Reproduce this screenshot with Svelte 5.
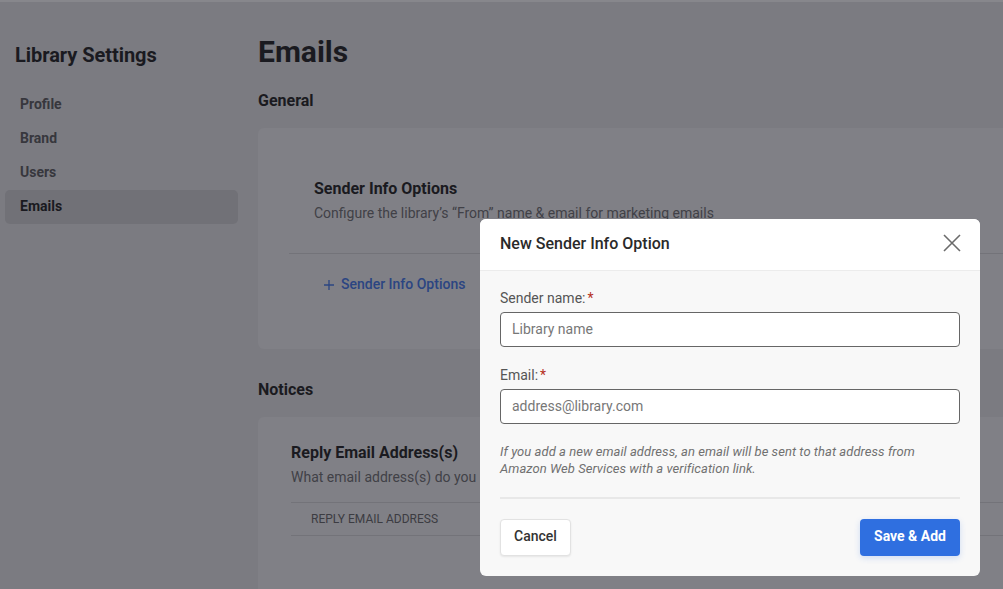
<script>
  const navItems = ["Profile", "Brand", "Users", "Emails"];
  let senderName = "";
  let email = "";
</script>

<div class="page">
  <aside class="sidebar">
    <h2>Library Settings</h2>
    <nav>
      {#each navItems as item}
        <div class="nav-item" class:active={item === "Emails"}>{item}</div>
      {/each}
    </nav>
  </aside>

  <main class="content">
    <h1>Emails</h1>
    <h3>General</h3>
    <section class="card sender-card">
      <div class="card-head">
        <h4>Sender Info Options</h4>
        <p>Configure the library’s “From” name &amp; email for marketing emails</p>
      </div>
      <div class="add-row">
        <svg width="12" height="12" viewBox="0 0 12 12"><path d="M6 1v10M1 6h10" stroke="currentColor" stroke-width="1.3" fill="none" /></svg>
        <span>Sender Info Options</span>
      </div>
    </section>

    <h3 class="notices">Notices</h3>
    <section class="card reply-card">
      <h4>Reply Email Address(s)</h4>
      <p>What email address(s) do you</p>
      <div class="table-head">REPLY EMAIL ADDRESS</div>
    </section>
  </main>

  <div class="modal">
    <header>
      <span>New Sender Info Option</span>
      <svg width="18" height="18" viewBox="0 0 18 18"><path d="M1 1l16 16M17 1L1 17" stroke="#6b6b6b" stroke-width="1.6" fill="none" /></svg>
    </header>
    <div class="modal-body">
      <label for="sender">Sender name:<span class="req">*</span></label>
      <input id="sender" type="text" placeholder="Library name" bind:value={senderName} />
      <label for="email" class="second">Email:<span class="req">*</span></label>
      <input id="email" type="text" placeholder="address@library.com" bind:value={email} />
      <p class="note">If you add a new email address, an email will be sent to that address from Amazon Web Services with a verification link.</p>
      <div class="actions">
        <button class="cancel">Cancel</button>
        <button class="save">Save &amp; Add</button>
      </div>
    </div>
  </div>
</div>

<style>
  :global(body) {
    margin: 0;
    font-family: Roboto, "Liberation Sans", sans-serif;
  }

  .page {
    position: relative;
    display: flex;
    height: 589px;
    overflow: hidden;
    background: #7b7b81;
    border-top: 2px solid #87878c;
    box-sizing: border-box;
    color: #1a1a20;
  }

  .sidebar {
    width: 238px;
    flex: none;
    padding: 42px 0 0 5px;
    box-sizing: border-box;
  }

  .sidebar h2 {
    margin: 0 0 21px 10px;
    font-size: 20px;
    line-height: 23px;
    font-weight: 700;
    letter-spacing: -0.05px;
  }

  .nav-item {
    height: 34px;
    line-height: 32px;
    padding-left: 15px;
    font-size: 14px;
    font-weight: 700;
    color: #37373d;
  }

  .nav-item.active {
    background: #717177;
    border-radius: 5px;
    color: #1a1a20;
  }

  .content {
    flex: 1;
    min-width: 0;
    margin-left: 20px;
    padding-top: 32px;
  }

  h1 {
    margin: 0;
    font-size: 30px;
    line-height: 35px;
    font-weight: 700;
  }

  h3 {
    margin: 22px 0 0;
    font-size: 16px;
    line-height: 19px;
    font-weight: 700;
  }

  h3.notices {
    margin-top: 31px;
  }

  .card {
    background: #808086;
    border-radius: 6px;
    box-sizing: border-box;
    width: 900px;
  }

  .sender-card {
    margin-top: 18px;
    height: 221px;
    padding: 51px 0 0 31px;
  }

  .card-head {
    padding: 0 0 31px 25px;
    border-bottom: 1px solid #737379;
  }

  h4 {
    margin: 0;
    font-size: 16px;
    line-height: 19px;
    font-weight: 700;
  }

  .card p {
    margin: 7px 0 0;
    font-size: 14px;
    line-height: 17px;
    color: #414147;
  }

  .add-row {
    display: flex;
    align-items: center;
    gap: 6px;
    margin: 22px 0 0 34px;
    font-size: 14px;
    line-height: 17px;
    font-weight: 500;
    color: #2b4582;
  }

  .reply-card {
    margin-top: 18px;
    height: 200px;
    padding: 26px 0 0 33px;
  }

  .table-head {
    margin-top: 16px;
    padding: 8px 0 8px 20px;
    font-size: 12px;
    line-height: 16px;
    color: #3c3c42;
    border-top: 1px solid #737379;
    border-bottom: 1px solid #737379;
  }

  .modal {
    position: absolute;
    left: 480px;
    top: 217px;
    width: 500px;
    height: 357px;
    border-radius: 6px;
    overflow: hidden;
    background: #f8f8f8;
    color: #333;
  }

  .modal header {
    display: flex;
    justify-content: space-between;
    align-items: center;
    height: 52px;
    box-sizing: border-box;
    padding: 0 19px 3px 20px;
    background: #fff;
    border-bottom: 1px solid #ececec;
    font-size: 16px;
    font-weight: 500;
    color: #2a2a2a;
  }

  .modal-body {
    display: flex;
    flex-direction: column;
    padding: 19px 20px 0;
  }

  label {
    font-size: 14px;
    line-height: 16px;
    margin-bottom: 6px;
    color: #555;
  }

  label.second {
    margin-top: 20px;
  }

  .req {
    margin-left: 2px;
    color: #b5301c;
  }

  input {
    height: 35px;
    box-sizing: border-box;
    padding: 0 11px 2px;
    border: 1px solid #666;
    border-radius: 4px;
    background: #fff;
    font-family: inherit;
    font-size: 14px;
    outline: none;
  }

  input::placeholder {
    color: #777;
    opacity: 1;
  }

  .note {
    margin: 19px 0 0;
    padding-bottom: 20px;
    font-size: 13px;
    line-height: 17px;
    font-style: italic;
    letter-spacing: 0.05px;
    color: #707070;
    border-bottom: 2px solid #e8e8e8;
  }

  .actions {
    display: flex;
    justify-content: space-between;
    margin-top: 20px;
  }

  button {
    height: 37px;
    border-radius: 4px;
    font-family: inherit;
    font-size: 14px;
    font-weight: 500;
    padding: 0 0 3px;
    cursor: pointer;
  }

  .cancel {
    width: 71px;
    background: #fff;
    border: 1px solid #e2e2e2;
    color: #333;
    box-shadow: 0 1px 2px rgba(0, 0, 0, 0.08);
  }

  .save {
    width: 100px;
    background: #2f6fe0;
    border: none;
    color: #fff;
    font-weight: 700;
    box-shadow: 0 2px 6px rgba(47, 111, 224, 0.2);
  }
</style>
